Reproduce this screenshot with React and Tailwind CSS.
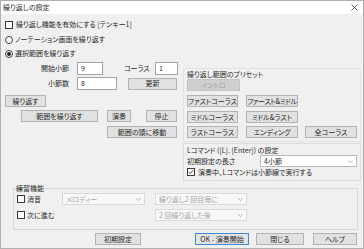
import clsx from 'clsx'

// Windows 風の小さなコントロール群
function Btn({ className, children, disabled, primary }) {
  return (
    <button
      className={clsx(
        'h-[12px] border flex items-center justify-center leading-none shrink-0 whitespace-nowrap overflow-hidden',
        disabled && 'border-[#c4c4c4] bg-[#cfcfcf] text-[#a2a2a2]',
        primary && 'border-[#3f8ad6] bg-[#e3e3e3]',
        !disabled && !primary && 'border-[#b3b3b3] bg-[#e1e1e1]',
        className
      )}
    >
      {children}
    </button>
  )
}

function Check({ checked }) {
  return (
    <span className="w-[8px] h-[8px] border border-[#3a3a3a] bg-white flex items-center justify-center shrink-0">
      {checked && (
        <svg width="6" height="6" viewBox="0 0 6 6">
          <path d="M0.8 3.1 L2.3 4.6 L5.2 1.1" fill="none" stroke="#222" strokeWidth="0.9" />
        </svg>
      )}
    </span>
  )
}

function Radio({ checked }) {
  return (
    <span className="w-[8px] h-[8px] rounded-full border border-[#3a3a3a] bg-white flex items-center justify-center shrink-0">
      {checked && <span className="w-[4px] h-[4px] rounded-full bg-[#222]" />}
    </span>
  )
}

function Field({ className, value }) {
  return (
    <div className={clsx('h-[13px] border border-[#a3a3a3] bg-white flex items-center pl-[3px] shrink-0', className)}>
      {value}
    </div>
  )
}

function Combo({ className, text, disabled }) {
  return (
    <div
      className={clsx(
        'h-[12px] border flex items-center justify-between pl-[3px] pr-[3px] shrink-0 whitespace-nowrap',
        disabled ? 'border-[#dadada] bg-[#f8f8f8] text-[#a5a5a5]' : 'border-[#b9b9b9] bg-white',
        className
      )}
    >
      <span>{text}</span>
      <svg width="5" height="3" viewBox="0 0 5 3">
        <path d="M0.3 0.3 L2.5 2.6 L4.7 0.3" fill="none" stroke="#9a9a9a" strokeWidth="0.7" />
      </svg>
    </div>
  )
}

export default function App() {
  return (
    <div className="w-[364px] h-[249px] bg-[#f0f0f0] border border-[#b0b0b0] flex flex-col text-[7px] leading-[9px] text-[#2b2b2b] whitespace-nowrap font-['Noto_Sans_CJK_JP','Noto_Sans',sans-serif] [font-feature-settings:'palt']">
      {/* Title bar */}
      <div className="h-[13px] bg-white flex items-center justify-between pl-[2px] pr-[5px] shrink-0">
        <span>繰り返しの設定</span>
        <svg width="7" height="7" viewBox="0 0 7 7">
          <path d="M0.5 0.5 L6.5 6.5 M6.5 0.5 L0.5 6.5" stroke="#333" strokeWidth="0.8" />
        </svg>
      </div>

      {/* Mode */}
      <div className="mt-[6px] h-[9px] flex items-center pl-[4px] gap-[3px]">
        <Check />
        <span>繰り返し機能を有効にする [テンキー1]</span>
      </div>
      <div className="mt-[6px] h-[9px] flex items-center pl-[4px] gap-[2px]">
        <Radio />
        <span>ノーテーション画面を繰り返す</span>
      </div>
      <div className="mt-[5px] h-[9px] flex items-center pl-[4px] gap-[2px]">
        <Radio checked />
        <span>選択範囲を繰り返す</span>
      </div>

      <div className="mt-[3px] flex">
        {/* Left column */}
        <div className="w-[181px] flex flex-col shrink-0">
          <div className="mt-[1px] h-[13px] flex items-center">
            <span className="w-[68px] text-right">開始小節</span>
            <Field className="ml-[8px] w-[26px]" value="9" />
            <span className="ml-[21px] w-[26px]">コーラス</span>
            <Field className="ml-[5px] w-[23px]" value="1" />
          </div>
          <div className="mt-[2px] h-[13px] flex items-center">
            <span className="w-[68px] text-right">小節数</span>
            <Field className="ml-[8px] w-[40px]" value="8" />
            <Btn className="ml-[11px] w-[49px]">更新</Btn>
          </div>
          <Btn className="mt-[5px] ml-[4px] w-[41px]">繰り返す</Btn>
          <div className="mt-[3px] flex">
            <Btn className="ml-[20px] w-[77px]">範囲を繰り返す</Btn>
            <Btn className="ml-[9px] w-[24px]">演奏</Btn>
            <Btn className="ml-[15px] w-[31px]">停止</Btn>
          </div>
          <Btn className="mt-[4px] ml-[106px] w-[70px]">範囲の頭に移動</Btn>
        </div>

        {/* Right column */}
        <div className="ml-[1px] w-[178px] flex flex-col">
          <div className="mt-[7px] border border-[#e3e3e3] flex flex-col pl-[3px] pb-[3px]">
            <span className="mt-[1px] h-[8px] leading-[8px]">繰り返し範囲のプリセット</span>
            <Btn disabled className="mt-[1px] w-[53px]">イントロ</Btn>
            <div className="mt-[4px] flex">
              <Btn className="w-[51px]">ファストコーラス</Btn>
              <Btn className="ml-[8px] w-[52px] tracking-[-0.3px]">ファースト&amp;ミドル</Btn>
            </div>
            <div className="mt-[4px] flex">
              <Btn className="w-[51px]">ミドルコーラス</Btn>
              <Btn className="ml-[8px] w-[52px]">ミドル&amp;ラスト</Btn>
            </div>
            <div className="mt-[3px] flex">
              <Btn className="w-[51px]">ラストコーラス</Btn>
              <Btn className="ml-[8px] w-[52px]">エンディング</Btn>
              <Btn className="ml-[7px] w-[52px]">全コーラス</Btn>
            </div>
          </div>

          <div className="mt-[1px] border border-[#dcdcdc] flex flex-col pl-[3px] pb-[4px]">
            <span className="mt-[2px] h-[8px] leading-[8px]">Lコマンド ([L]. [Enter]) の設定</span>
            <div className="mt-[1px] h-[12px] flex items-center">
              <span className="w-[73px]">初期設定の長さ</span>
              <Combo className="w-[97px]" text="4小節" />
            </div>
            <div className="mt-[1px] h-[8px] flex items-center gap-[3px]">
              <Check checked />
              <span>演奏中、Lコマンドは小節線で実行する</span>
            </div>
          </div>
        </div>
      </div>

      {/* Practice */}
      <fieldset className="mt-[3px] ml-[12px] w-[345px] border border-[#d8d8d8] pb-[8px]">
        <legend className="ml-[2px] h-[8px] leading-[8px]">練習機能</legend>
        <div className="mt-[1px] h-[12px] flex items-center pl-[3px]">
          <div className="w-[45px] flex items-center gap-[2px]">
            <Check />
            <span>消音</span>
          </div>
          <Combo disabled className="w-[83px]" text="メロディー" />
          <Combo disabled className="ml-[10px] w-[92px]" text="繰り返し2 回目毎に" />
        </div>
        <div className="mt-[4px] h-[12px] flex items-center pl-[3px]">
          <div className="w-[45px] flex items-center gap-[2px]">
            <Check />
            <span>次に進む</span>
          </div>
          <div className="w-[83px]" />
          <Combo disabled className="ml-[10px] w-[92px]" text="2 回繰り返した後" />
        </div>
      </fieldset>

      {/* Footer */}
      <div className="mt-[3px] flex pl-[94px]">
        <Btn className="w-[46px]">初期設定</Btn>
        <Btn primary className="ml-[54px] w-[54px]">OK - 演奏開始</Btn>
        <Btn className="ml-[7px] w-[48px]">閉じる</Btn>
        <Btn className="ml-[9px] w-[44px]">ヘルプ</Btn>
      </div>
    </div>
  )
}
